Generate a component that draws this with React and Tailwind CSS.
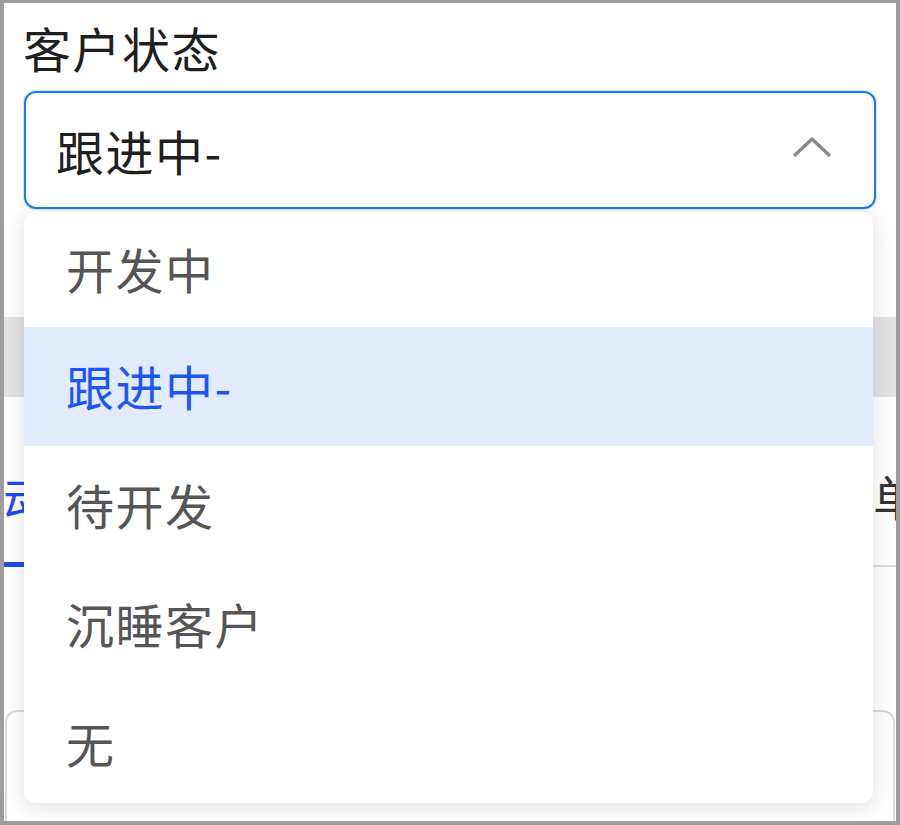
import React from "react";

const font = { fontFamily: '"Noto Sans CJK SC", "Noto Sans", sans-serif' };

const items = [
  { label: "开发中", h: "h-[115px]" },
  { label: "跟进中-", h: "h-[119px]", active: true },
  { label: "待开发", h: "h-[119px]" },
  { label: "沉睡客户", h: "h-[119px]" },
  { label: "无", h: "h-[119px]" },
];

export default function App() {
  return (
    <div
      className="relative w-[900px] h-[825px] overflow-hidden bg-white border-l-4 border-r-4 border-b-4 border-t-[3px] border-[#9d9d9d]"
      style={font}
    >
      {/* page content in flow */}
      <div className="flex flex-col h-full">
        <div className="pl-[19px] pt-[14px] h-[77px] text-[48px] leading-[60px] tracking-[1.5px] text-[#1f1f1f]">
          客户状态
        </div>
        <div className="mx-[20px] mt-[11px] h-[118px] shrink-0 rounded-[12px] border-2 border-[#1a7cf0] ring-1 ring-[#1a7cf0]/20 flex items-center justify-between pl-[30px] pr-[43px]">
          <span className="text-[48px] leading-[60px] tracking-[1.5px] text-[#1f1f1f]">跟进中-</span>
          <svg width="38" height="22" viewBox="0 0 38 22" className="mb-[6px]">
            <polyline
              points="2,19 19,3 36,19"
              fill="none"
              stroke="#888888"
              strokeWidth="3.2"
              strokeLinecap="round"
              strokeLinejoin="round"
            />
          </svg>
        </div>
        <div className="h-[108px] shrink-0" />
        <div className="h-[80px] shrink-0 bg-[#e3e3e3]" />
        <div className="h-[170px] shrink-0 flex items-end gap-[770px] border-b-2 border-[#dddddd] bg-white">
          <div className="shrink-0 whitespace-nowrap -ml-[1px] mb-[-2px] pb-[35px] border-b-[5px] border-[#1f4cf0] text-[48px] leading-[60px] text-[#1f4cf0] w-[100px]">
            动态
          </div>
          <div className="shrink-0 whitespace-nowrap pb-[40px] text-[48px] leading-[60px] text-[#333333]">
            单据
          </div>
        </div>
        <div className="h-[143px] shrink-0 bg-white" />
        <div className="flex-1 ml-[1px] mr-[1px] rounded-t-[12px] border-t-2 border-l-2 border-r-2 border-[#dcdcdc] bg-white" />
      </div>

      {/* dropdown overlay */}
      <div className="absolute left-[20px] top-[209px] w-[849px] rounded-[12px] bg-white overflow-hidden shadow-[0_4px_22px_rgba(0,0,0,0.13)]">
        {items.map((it) => (
          <div
            key={it.label}
            className={`${it.h} flex items-center pl-[42px] pb-[3px] text-[48px] leading-[60px] tracking-[1.5px] ${
              it.active ? "bg-[#e2ebfc] text-[#1f55f6]" : "text-[#555555]"
            }`}
          >
            {it.label}
          </div>
        ))}
      </div>
    </div>
  );
}
